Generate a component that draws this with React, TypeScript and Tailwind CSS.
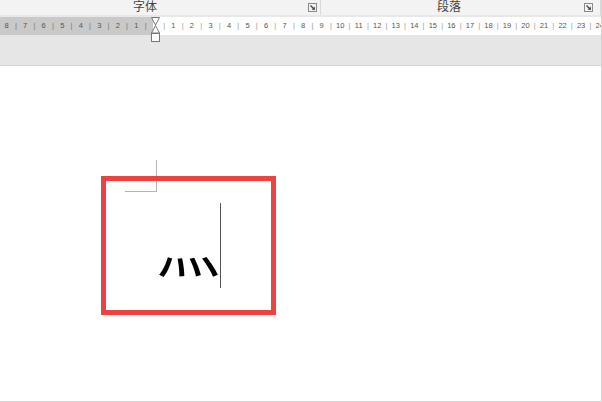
import React from 'react'

const font = { fontFamily: '"Liberation Sans", "Noto Sans CJK SC", sans-serif' }

function Launcher() {
  return (
    <svg width="9" height="9" viewBox="0 0 9 9" className="shrink-0">
      <rect x="0.5" y="0.5" width="8" height="8" fill="none" stroke="#8a8a8a" />
      <path d="M2.5 2.5 L6.5 6.5" stroke="#444" strokeWidth="1.2" />
      <path d="M3.6 6.8 L6.8 6.8 L6.8 3.6 Z" fill="#444" />
    </svg>
  )
}

function RulerMarker() {
  return (
    <svg width="9" height="26" viewBox="0 0 9 26" className="absolute left-[151px] top-0">
      <path d="M0.5 0.5 L8.5 0.5 L4.5 8 Z" fill="#fff" stroke="#777" />
      <path d="M4.5 8.5 L8.5 16 L0.5 16 Z" fill="#fff" stroke="#777" />
      <rect x="0.5" y="16.5" width="8" height="8" fill="#fff" stroke="#777" />
    </svg>
  )
}

// ruler cells: numbers on whole units, ticks on half units
const left = [8, 7, 6, 5, 4, 3, 2, 1]
const right = Array.from({ length: 24 }, (_, i) => i + 1)

function Cell({ children }: { children: React.ReactNode }) {
  return <div className="w-[9.275px] shrink-0 flex justify-center">{children}</div>
}

export default function App() {
  return (
    <div className="w-[602px] h-[402px] bg-white flex flex-col border-r border-b border-[#d4d4d4] overflow-hidden" style={font}>
      {/* ribbon group labels */}
      <div className="h-[15px] bg-[#f3f3f3] flex text-[12px] leading-[15px] text-[#444]">
        <div className="w-[321px] flex items-center border-r border-[#dadada]">
          <div className="w-[290px] text-center">字体</div>
          <div className="ml-[18px]"><Launcher /></div>
        </div>
        <div className="flex-1 flex items-center border-r border-[#dadada]">
          <div className="w-[256px] text-center">段落</div>
          <div className="ml-[7px]"><Launcher /></div>
        </div>
      </div>
      <div className="h-[2px] bg-[#e8e8e8]" />

      {/* ruler */}
      <div className="relative h-[18px] flex bg-white">
        <div className="w-[153px] shrink-0 bg-[#c9c9c9]" />
        <div className="absolute inset-0 flex items-center pl-[2px] text-[7.5px] leading-none text-[#555]">
          {left.map((n) => (
            <React.Fragment key={'l' + n}>
              <Cell>{n}</Cell>
              <Cell><span className="text-[#777]">|</span></Cell>
            </React.Fragment>
          ))}
          <Cell>{''}</Cell>
          {right.map((n) => (
            <React.Fragment key={'r' + n}>
              <Cell><span className="text-[#999]">|</span></Cell>
              <Cell>{n}</Cell>
            </React.Fragment>
          ))}
        </div>
        <RulerMarker />
      </div>
      <div className="h-[31px] bg-[#e6e6e6] border-b border-[#d6d6d6]" />

      {/* document page */}
      <div className="relative flex-1 bg-white">
        <div className="ml-[125px] mt-[94px] w-[32px] h-[32px] border-r border-b border-[#b4b4b4]" />
        <div className="ml-[156px] mt-[11px] flex items-start">
          <span
            className="mt-[9px] text-[64px] leading-none font-normal text-black"
            style={{ fontFamily: '"Noto Sans CJK SC", sans-serif' }}
          >
            灬
          </span>
          <div className="w-px h-[85px] bg-[#555]" />
        </div>
        <div className="absolute left-[101px] top-[110px] w-[175px] h-[139px] border-[5px] border-[#ee4242]" />
      </div>
    </div>
  )
}
